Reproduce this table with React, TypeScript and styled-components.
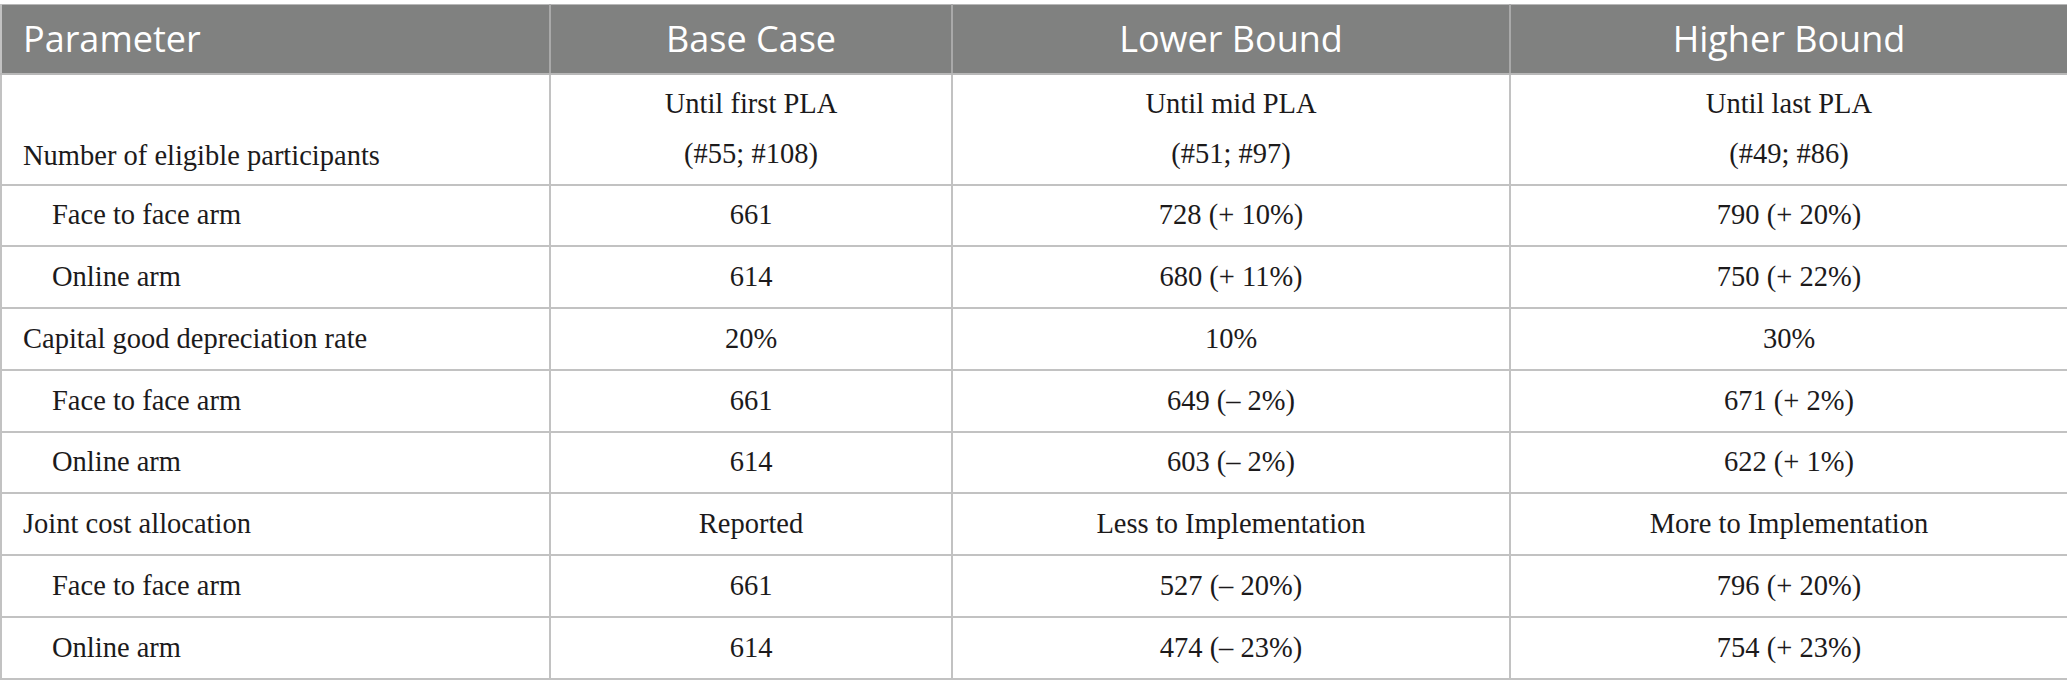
import { createGlobalStyle, styled } from "styled-components";

const GlobalStyle = createGlobalStyle`
    body {
        margin: 0;
        padding: 4px 0 0 0;
        background: #ffffff;
    }
`;

interface Row {
    label: string;
    indent?: boolean;
    base: string[];
    lower: string[];
    higher: string[];
}

const rows: Row[] = [
    { label: "Number of eligible participants", base: ["Until first PLA", "(#55; #108)"], lower: ["Until mid PLA", "(#51; #97)"], higher: ["Until last PLA", "(#49; #86)"] },
    { label: "Face to face arm", indent: true, base: ["661"], lower: ["728 (+ 10%)"], higher: ["790 (+ 20%)"] },
    { label: "Online arm", indent: true, base: ["614"], lower: ["680 (+ 11%)"], higher: ["750 (+ 22%)"] },
    { label: "Capital good depreciation rate", base: ["20%"], lower: ["10%"], higher: ["30%"] },
    { label: "Face to face arm", indent: true, base: ["661"], lower: ["649 (\u2013 2%)"], higher: ["671 (+ 2%)"] },
    { label: "Online arm", indent: true, base: ["614"], lower: ["603 (\u2013 2%)"], higher: ["622 (+ 1%)"] },
    { label: "Joint cost allocation", base: ["Reported"], lower: ["Less to Implementation"], higher: ["More to Implementation"] },
    { label: "Face to face arm", indent: true, base: ["661"], lower: ["527 (\u2013 20%)"], higher: ["796 (+ 20%)"] },
    { label: "Online arm", indent: true, base: ["614"], lower: ["474 (\u2013 23%)"], higher: ["754 (+ 23%)"] },
];

function Lines({ items }: { items: string[] }) {
    return (
        <>
            {items.map((t, i) => (
                <div key={i}>{t}</div>
            ))}
        </>
    );
}

export default function App() {
    return (
        <>
            <GlobalStyle />
            <Table>
                <colgroup>
                    <col style={{ width: 549 }} />
                    <col style={{ width: 402 }} />
                    <col style={{ width: 558 }} />
                    <col style={{ width: 558 }} />
                </colgroup>
                <thead>
                    <tr>
                        <HeadCell $align="left">Parameter</HeadCell>
                        <HeadCell>Base Case</HeadCell>
                        <HeadCell>Lower Bound</HeadCell>
                        <HeadCell>Higher Bound</HeadCell>
                    </tr>
                </thead>
                <tbody>
                    {rows.map((r, i) => (
                        <BodyRow key={i} $tall={r.base.length > 1}>
                            <LabelCell $indent={!!r.indent} $bottom={r.base.length > 1}>{r.label}</LabelCell>
                            <ValueCell><Lines items={r.base} /></ValueCell>
                            <ValueCell><Lines items={r.lower} /></ValueCell>
                            <ValueCell><Lines items={r.higher} /></ValueCell>
                        </BodyRow>
                    ))}
                </tbody>
            </Table>
        </>
    );
}

const Table = styled.table`
    width: 2067px;
    table-layout: fixed;
    border-collapse: collapse;
    border: 2px solid #c2c2c2;
    border-top: 1px solid #b8b8b8;

    thead tr {
        height: 69px;
        background: #808180;
    }
`;

const HeadCell = styled.th<{ $align?: "left" | "center" }>`
    padding: 0 21px;
    text-align: ${({ $align }) => $align ?? "center"};
    font-family: "Open Sans", "Noto Sans", sans-serif;
    font-weight: 400;
    font-size: 36px;
    color: #ffffff;
    border-left: 2px solid #a9a9a9;
    border-bottom: 2px solid #b8b8b8;
    vertical-align: middle;

    &:first-child {
        border-left: 0;
    }
`;

const BodyRow = styled.tr<{ $tall: boolean }>`
    height: ${({ $tall }) => ($tall ? "111px" : "61.75px")};
`;

const Cell = styled.td`
    font-family: "Liberation Serif", "Times New Roman", serif;
    font-size: 28.5px;
    color: #1c1a1b;
    line-height: 50px;
    border: 2px solid #c2c2c2;
    padding: 0 21px;
    vertical-align: middle;
`;

const LabelCell = styled(Cell)<{ $indent: boolean; $bottom: boolean }>`
    text-align: left;
    padding-left: ${({ $indent }) => ($indent ? "50px" : "21px")};
    vertical-align: ${({ $bottom }) => ($bottom ? "bottom" : "middle")};
    padding-bottom: ${({ $bottom }) => ($bottom ? "3px" : "0")};
`;

const ValueCell = styled(Cell)`
    text-align: center;
`;
